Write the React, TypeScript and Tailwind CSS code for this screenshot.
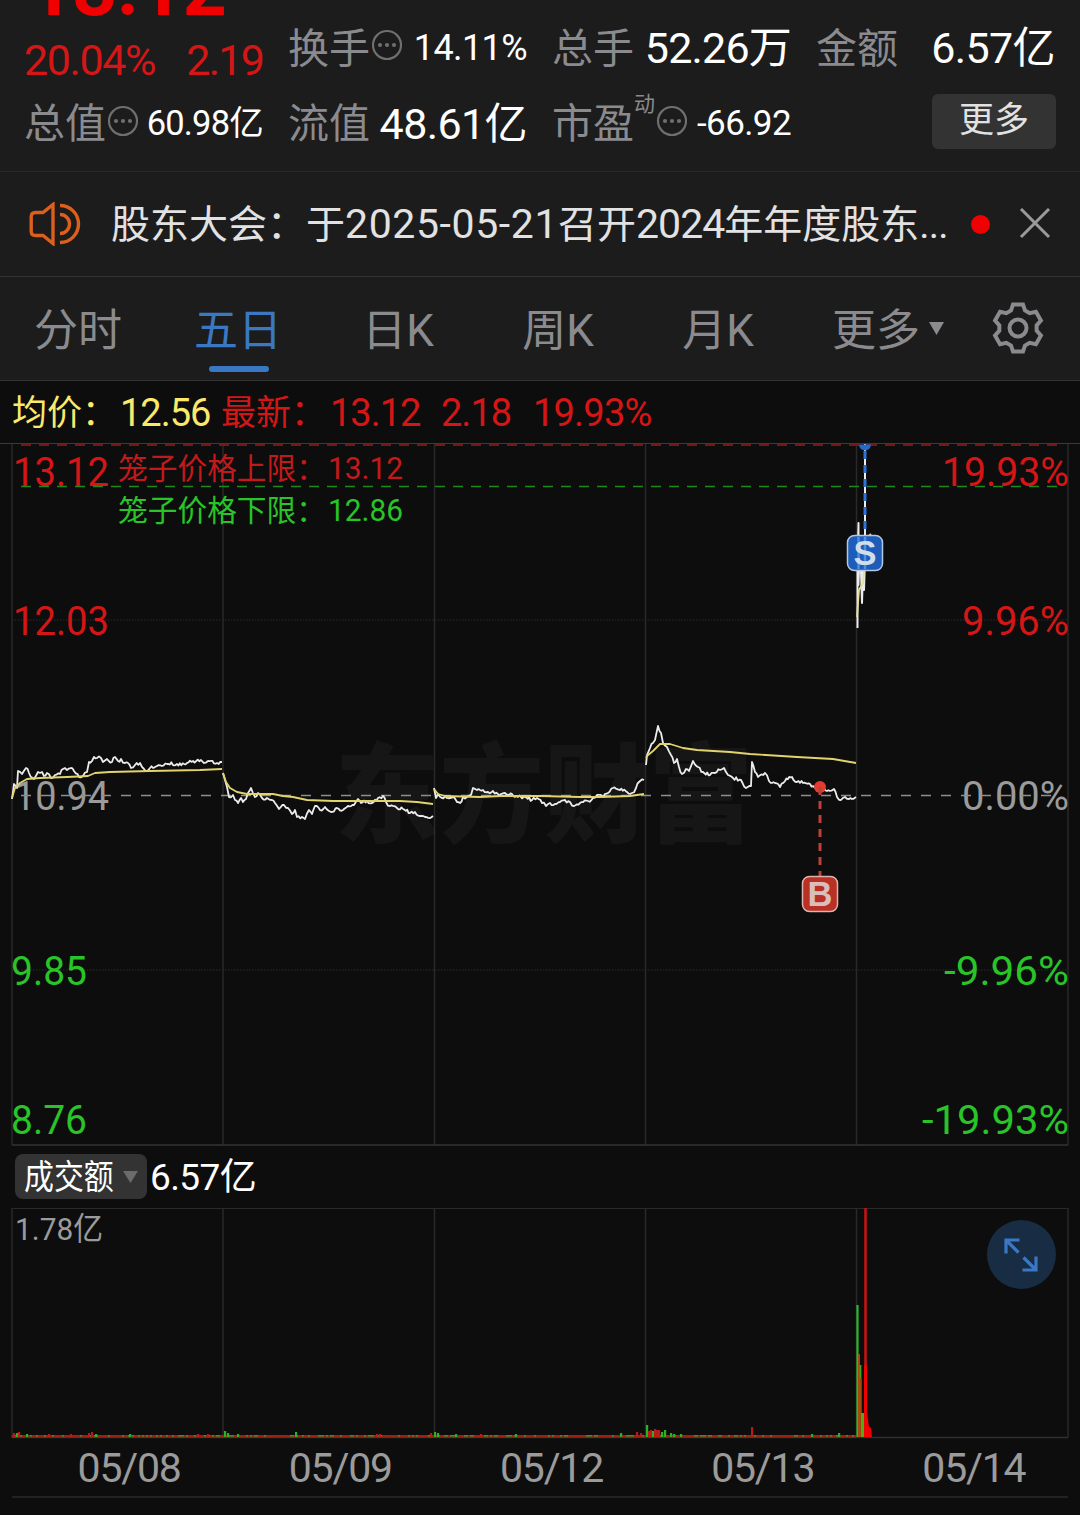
import React from 'react';
import clsx from 'clsx';

const FONT = "font-['Roboto','Noto_Sans_CJK_SC',sans-serif]";

// ── Data ──────────────────────────────────────────────────────────────────────
type Pt = [number, number];

const TABS = ['分时', '五日', '日K', '周K', '月K'];
const DATES = ['05/08', '05/09', '05/12', '05/13', '05/14'];
const DAY_X = [12, 223, 434.5, 645.5, 856.5, 1068];

const PRICE: Pt[][] = [
  [
    [12, 799], [14, 784], [17, 788], [18, 771], [22, 774], [26, 768], [29, 773], [34, 779], [38, 772], [42, 772],
    [44, 776], [47, 773], [51, 778], [55, 775], [60, 774], [63, 769], [67, 770], [71, 768], [74, 771], [79, 777],
    [83, 776], [87, 772], [89, 762], [92, 761], [94, 757], [97, 758], [101, 758], [103, 762], [107, 759], [112, 762],
    [115, 757], [118, 761], [121, 759], [125, 763], [128, 763], [131, 768], [135, 765], [140, 763], [144, 769],
    [147, 771], [150, 768], [153, 768], [157, 766], [162, 766], [167, 764], [177, 764], [187, 763], [193, 761],
    [201, 760], [204, 763], [208, 761], [217, 763], [222, 762],
  ],
  [
    [223, 773], [227, 787], [229, 797], [233, 795], [235, 800], [238, 803], [241, 798], [243, 802], [246, 799],
    [248, 793], [251, 788], [255, 797], [258, 793], [262, 798], [267, 798], [272, 800], [275, 803], [279, 809],
    [284, 805], [288, 808], [292, 814], [295, 810], [297, 817], [302, 817], [305, 819], [309, 810], [312, 814],
    [315, 806], [320, 810], [325, 807], [331, 812], [337, 808], [343, 810], [348, 806], [354, 805], [358, 799],
    [361, 803], [367, 801], [372, 803], [378, 798], [383, 796], [386, 802], [390, 806], [397, 808], [403, 809],
    [410, 813], [415, 812], [420, 816], [425, 817], [433, 816],
  ],
  [
    [434, 788], [436, 798], [438, 794], [442, 798], [445, 796], [450, 798], [454, 797], [457, 802], [460, 803],
    [463, 797], [467, 797], [471, 795], [473, 788], [477, 790], [483, 790], [488, 792], [493, 791], [498, 794],
    [505, 793], [512, 794], [518, 797], [525, 797], [532, 800], [537, 798], [542, 803], [546, 806], [550, 803],
    [555, 804], [560, 802], [565, 800], [570, 802], [574, 806], [580, 803], [588, 801], [593, 798], [597, 795],
    [602, 796], [608, 793], [613, 788], [620, 790], [627, 792], [632, 793], [636, 788], [639, 782], [644, 780],
  ],
  [
    [646, 765], [647, 755], [650, 748], [653, 743], [655, 740], [658, 726], [661, 733], [663, 743], [667, 747],
    [671, 755], [674, 763], [677, 759], [679, 767], [682, 774], [686, 769], [689, 771], [693, 761], [698, 767],
    [703, 772], [710, 775], [715, 773], [720, 770], [724, 768], [728, 775], [733, 778], [741, 780], [746, 788],
    [751, 786], [752, 762], [755, 772], [758, 777], [763, 775], [765, 773], [769, 781], [775, 783], [780, 787],
    [785, 781], [792, 777], [797, 782], [803, 783], [810, 784], [815, 788], [820, 788], [827, 791], [834, 789],
    [837, 797], [841, 800], [845, 797], [849, 799], [856, 797],
  ],
];

const AVERAGE: Pt[][] = [
  [[12, 798], [15, 788], [20, 783], [27, 779], [40, 778], [67, 777], [88, 776], [95, 773], [110, 772], [150, 771], [200, 770], [222, 769]],
  [[223, 773], [226, 782], [230, 788], [237, 792], [247, 794], [273, 794], [283, 796], [293, 797], [307, 800], [333, 801], [400, 801], [417, 802], [433, 804]],
  [[434, 789], [438, 794], [445, 796], [480, 797], [500, 796], [540, 796], [580, 797], [600, 797], [630, 796], [644, 794]],
  [[646, 758], [647, 756], [653, 751], [660, 744], [670, 744], [683, 748], [697, 750], [730, 752], [750, 754], [797, 757], [833, 759], [856, 763]],
];

// x, height, colour of the turnover bars that rise above the noise floor
const SPIKES: [number, number, 'r' | 'g'][] = [
  [13, 4, 'r'], [16, 4, 'g'], [18, 5, 'r'], [26, 3, 'g'], [48, 3, 'r'], [70, 3, 'r'], [88, 4, 'r'], [91, 5, 'r'], [95, 3, 'g'],
  [129, 3, 'g'], [197, 3, 'r'], [207, 3, 'r'], [224, 6, 'g'], [227, 4, 'g'], [237, 3, 'g'], [295, 5, 'g'], [376, 3, 'r'],
  [379, 3, 'r'], [430, 4, 'r'], [434, 5, 'g'], [437, 4, 'g'], [455, 3, 'g'], [480, 3, 'r'], [515, 3, 'g'], [620, 4, 'g'],
  [636, 5, 'r'], [640, 4, 'r'], [646, 12, 'g'], [648, 6, 'r'], [650, 7, 'r'], [652, 6, 'g'], [654, 8, 'r'], [656, 7, 'r'],
  [658, 7, 'r'], [661, 5, 'g'], [664, 7, 'g'], [670, 4, 'g'], [673, 3, 'g'], [680, 3, 'g'], [751, 10, 'r'], [811, 3, 'g'], [838, 4, 'g'],
];

// ── Helpers ───────────────────────────────────────────────────────────────────
// Cheap deterministic noise in the range -1..1
function noise(n: number) {
  const v = Math.sin(n * 12.9898) * 43758.5453;
  return (v - Math.floor(v)) * 2 - 1;
}

function smooth(points: Pt[]) {
  return 'M' + points.map(([x, y]) => `${x} ${y}`).join('L');
}

function jagged(points: Pt[]) {
  const out: Pt[] = [];
  points.forEach(([x, y], i) => {
    out.push([x, y]);
    const next = points[i + 1];
    if (!next) return;
    const steps = Math.floor((next[0] - x) / 1.4);
    for (let s = 1; s < steps; s++) {
      const t = s / steps;
      out.push([x + (next[0] - x) * t, y + (next[1] - y) * t + noise(x + s) * 1.8]);
    }
  });
  return smooth(out);
}

// ── Icons ─────────────────────────────────────────────────────────────────────
function MoreDots() {
  return (
    <svg className="h-8 w-8 shrink-0" viewBox="0 0 32 32" fill="#6f6f6f">
      <circle cx="17" cy="16" r="14" fill="none" stroke="#6f6f6f" strokeWidth="2.2" />
      <circle cx="10" cy="16" r="2.1" />
      <circle cx="17" cy="16" r="2.1" />
      <circle cx="24" cy="16" r="2.1" />
    </svg>
  );
}

function Speaker() {
  return (
    <svg className="h-[44px] w-[52px] shrink-0" viewBox="0 0 52 44" fill="none" stroke="#dc5f1c" strokeWidth="3.4">
      <path d="M24 2.5V41.5L14 33.5H6.500Q2.200 33.500 2.200 29V15Q2.200 10.500 6.500 10.500H14Z" />
      <path d="M31 3.500A18.500 18.500 0 0 1 31 40.500" />
      <path d="M31 12.500A9.500 9.500 0 0 1 31 31.500" />
    </svg>
  );
}

function Gear() {
  const tooth: Pt[] = [[-7, -17.5], [-5, -23.6], [5, -23.6], [7, -17.5]];
  const points = [0, 60, 120, 180, 240, 300].flatMap((deg) => {
    const a = (deg * Math.PI) / 180;
    return tooth.map(([x, y]) =>
      [(x * Math.cos(a) - y * Math.sin(a)).toFixed(2), (x * Math.sin(a) + y * Math.cos(a)).toFixed(2)].join(','),
    );
  });
  return (
    <svg className="h-[54px] w-[54px]" viewBox="-27 -27 54 54" fill="none" stroke="#8b8b8f" strokeWidth="4">
      <polygon points={points.join(' ')} />
      <circle r="8.500" />
    </svg>
  );
}

// ── Quote header ──────────────────────────────────────────────────────────────
function Label({ children }: { children: React.ReactNode }) {
  return <span className="-ml-px pt-[4px] text-[41px] text-[#8b8b8f]">{children}</span>;
}

function QuoteHeader() {
  return (
    <section className="grid h-[172px] grid-cols-[238px_238px_238px_238px] grid-rows-[85px_75px] gap-x-[26px] overflow-hidden border-b border-[#282828] px-[25px] leading-none whitespace-nowrap text-white">
      <div className="flex flex-col">
        <div className="-mt-[50px] ml-[4px] h-[89px] text-[77px] leading-[78px] font-bold tracking-[-0.3px] text-[#f00000]">13.12</div>
        <div className="flex justify-between text-[43px] text-[#d51616]">
          <span className="-ml-px tracking-[-1.4px]">20.04%</span>
          <span className="tracking-[-1.8px]">2.19</span>
        </div>
      </div>
      <div className="flex items-center pt-[10px]">
        <Label>换手</Label>
        <span className="-mt-1.5"><MoreDots /></span>
        <span className="ml-auto text-[36px] tracking-[-0.6px]">14.11%</span>
      </div>
      <div className="flex items-center justify-between pt-[10px]">
        <Label>总手</Label>
        <span className="pt-[2px] text-[43px] tracking-[-0.8px]">52.26万</span>
      </div>
      <div className="flex items-center justify-between pt-[10px]">
        <Label>金额</Label>
        <span className="pt-[2px] text-[43px] tracking-[-0.6px]">6.57亿</span>
      </div>

      <div className="flex items-center">
        <Label>总值</Label>
        <span className="-mt-1"><MoreDots /></span>
        <span className="ml-auto pt-px text-[34.5px] tracking-[-0.8px]">60.98亿</span>
      </div>
      <div className="flex items-center justify-between">
        <Label>流值</Label>
        <span className="pt-[3px] text-[43px] tracking-[-0.6px]">48.61亿</span>
      </div>
      <div className="flex items-center">
        <Label>市盈</Label>
        <span className="-mt-[36px] text-[21px] text-[#8b8b8f]">动</span>
        <span className="-mt-1"><MoreDots /></span>
        <span className="ml-auto pt-[2px] text-[35px] tracking-[-0.6px]">-66.92</span>
      </div>
      <div className="flex items-center justify-end">
        <button className="mt-[-2px] mr-[-1px] h-[55px] w-[124px] rounded-md bg-[#333] pb-0.5 text-[35px] text-[#e2e2e2]">更多</button>
      </div>
    </section>
  );
}

// ── Announcement ──────────────────────────────────────────────────────────────
function NoticeBar() {
  return (
    <section className="flex h-[105px] items-center border-b border-[#333] pl-[29px] whitespace-nowrap">
      <Speaker />
      <p className="ml-[30px] w-[838px] text-[39px] leading-none text-[#e2e2e2]">
        股东大会：于<span className="text-[41px] tracking-[0.6px]">2025-05-21</span>召开
        <span className="text-[41px] tracking-[-1px]">2024</span>年年度股东<span className="tracking-[-0.8px]">...</span>
      </p>
      <span className="ml-[22px] h-[19px] w-[19px] rounded-full bg-[#f00000]" />
      <svg className="ml-[29px] h-8 w-8" viewBox="0 0 32 32" stroke="#9a9a9a" strokeWidth="3">
        <path d="M2 1L30 29M30 1L2 29" />
      </svg>
    </section>
  );
}

// ── Period tabs ───────────────────────────────────────────────────────────────
function PeriodTabs() {
  return (
    <nav className="flex h-[104px] border-b border-[#333] text-[44px] leading-none text-[#8b8b8f]">
      {TABS.map((tab) => (
        <div key={tab} className={clsx('flex w-[160px] flex-col items-center pt-[32px]', tab === '五日' && 'text-[#3a78c4]')}>
          <span className="-ml-[4px]">{tab}</span>
          {tab === '五日' && <span className="mt-[13px] mr-[2px] h-[6px] w-[60px] rounded-full bg-[#3a78c4]" />}
        </div>
      ))}
      <div className="flex items-start pt-[32px] pl-[32px]">
        更多
        <svg className="mt-[13px] ml-[9px] h-[13px] w-[15px]" viewBox="0 0 15 13" fill="#8b8b8f">
          <path d="M0 0H15L7.500 13Z" />
        </svg>
      </div>
      <div className="mt-[24px] mr-[35px] ml-auto">
        <Gear />
      </div>
    </nav>
  );
}

function PriceSummary() {
  return (
    <div className="flex h-[62px] items-center pl-[12px] text-[35px] leading-none whitespace-nowrap text-[#d51616]">
      <span className="w-[108px] pt-[3px] text-[#fbe96b]">均价：</span>
      <span className="w-[101px] pt-px text-[38px] tracking-[-1px] text-[#fbe96b]">12.56</span>
      <span className="w-[109px] pt-[3px]">最新：</span>
      <span className="w-[111px] pt-px text-[38px] tracking-[-1px]">13.12</span>
      <span className="w-[92px] pt-px text-[38px] tracking-[-1px]">2.18</span>
      <span className="pt-px text-[38px] tracking-[-0.8px]">19.93%</span>
    </div>
  );
}

// ── Five-day price chart ──────────────────────────────────────────────────────
function AxisText({ x, y, w, fill, size = 40.5, children }: { x: number; y: number; w: number; fill: string; size?: number; children: string }) {
  return (
    <text x={x} y={y} fontSize={size} fill={fill} textLength={w} lengthAdjust="spacingAndGlyphs">
      {children}
    </text>
  );
}

function PriceChart() {
  return (
    <svg className="block h-[703px] w-[1080px]" viewBox="0 443 1080 703">
      <text x="335" y="834" fontSize="108" fontWeight="900" fill="#161616" textLength="418" lengthAdjust="spacingAndGlyphs">
        东方财富
      </text>

      {/* Grid */}
      <path d="M0 443.500H1080" stroke="#3a3a3a" />
      {DAY_X.map((x) => (
        <path key={x} d={`M${x} 444V1145`} stroke="#292929" strokeWidth="1.500" />
      ))}
      <path d="M12 1145H1068" stroke="#333" strokeWidth="1.500" />
      <path d="M12 620H1068M12 970H1068" stroke="#2c2c2c" strokeDasharray="1.500 1.500" />

      <AxisText x={13} y={486} w={96} fill="#d51616">13.12</AxisText>
      <AxisText x={13} y={635} w={96} fill="#d51616">12.03</AxisText>
      <AxisText x={14} y={810} w={95} fill="#9b9b9b">10.94</AxisText>
      <AxisText x={11} y={985} w={76} fill="#28c428">9.85</AxisText>
      <AxisText x={11} y={1134} w={76} fill="#28c428">8.76</AxisText>
      <AxisText x={942} y={486} w={127} fill="#d51616">19.93%</AxisText>
      <AxisText x={962} y={635} w={107} fill="#d51616">9.96%</AxisText>
      <AxisText x={962} y={810} w={107} fill="#9b9b9b">0.00%</AxisText>
      <AxisText x={944} y={985} w={125} fill="#28c428">-9.96%</AxisText>
      <AxisText x={922} y={1134} w={147} fill="#28c428">-19.93%</AxisText>

      {/* Price cage limits */}
      <path d="M21 445H1058" stroke="#701919" strokeWidth="2.200" strokeDasharray="10 8" />
      <path d="M21 486.500H1058" stroke="#1c8a1c" strokeWidth="1.400" strokeDasharray="10 8" />
      <AxisText x={118} y={479} w={208} size={30} fill="#c21a1a">笼子价格上限：</AxisText>
      <AxisText x={328} y={479} w={75} size={31.5} fill="#c21a1a">13.12</AxisText>
      <AxisText x={118} y={521} w={208} size={30} fill="#28c428">笼子价格下限：</AxisText>
      <AxisText x={328} y={521} w={75} size={31.5} fill="#28c428">12.86</AxisText>

      <path d="M21 795.500H1058" stroke="#8e8e8e" strokeWidth="1.600" strokeDasharray="10 10" />

      {/* Curves */}
      <g fill="none" strokeLinejoin="round">
        {PRICE.map((day, i) => (
          <path key={i} d={jagged(day)} stroke="#ececec" strokeWidth="1.800" />
        ))}
        {AVERAGE.map((day, i) => (
          <path key={i} d={smooth(day)} stroke="#e2d46c" strokeWidth="1.800" />
        ))}
        <path d="M857.500 628V560L858.500 523V585L860 540L862 603L863 570L864 590L865 560V444" stroke="#ececec" strokeWidth="2" />
        <path d="M857 617L859 590L863 583L865 563L867 538L871 534" stroke="#e9df9a" strokeWidth="1.800" />
      </g>

      {/* Sell marker */}
      <path d="M859 444.500A6 6 0 0 0 871 444.500Z" fill="#2469cc" />
      <path d="M865 445V536" stroke="#2f74d6" strokeWidth="3" strokeDasharray="8 6" strokeDashoffset="-6" />
      <rect x="847.500" y="535.500" width="35" height="35" rx="7" fill="#1d5cb8" stroke="#b3c6e4" strokeWidth="1.500" />
      <path d="M858.500 537V569M865 537V569" stroke="#4d8fe0" strokeWidth="2.500" />
      <AxisBadge x={865} y={565} fill="#d3dceb">S</AxisBadge>

      {/* Buy marker */}
      <circle cx="820" cy="787" r="6" fill="#e23c30" />
      <path d="M820 787V877" stroke="#bb4038" strokeWidth="3" strokeDasharray="8 6" />
      <rect x="802.500" y="876.500" width="35" height="35" rx="7" fill="#b93025" stroke="#dcb3ae" strokeWidth="1.500" />
      <AxisBadge x={820} y={906} fill="#d9bebc">B</AxisBadge>
    </svg>
  );
}

function AxisBadge({ x, y, fill, children }: { x: number; y: number; fill: string; children: string }) {
  return (
    <text x={x} y={y} fontSize="34.500" fontWeight="700" fill={fill} textAnchor="middle" className="font-['Liberation_Sans',sans-serif]">
      {children}
    </text>
  );
}

// ── Turnover ──────────────────────────────────────────────────────────────────
function VolumeHeader() {
  return (
    <div className="flex h-[62px] items-start pt-[8px] pl-[15px] leading-none whitespace-nowrap text-white">
      <div className="flex h-[45px] w-[132px] items-center rounded-lg bg-[#333] pl-[9px]">
        <span className="w-[99px] origin-left scale-x-[0.88] pt-px text-[34px]">成交额</span>
        <svg className="h-[12px] w-[15px]" viewBox="0 0 15 12" fill="#6b6b6b">
          <path d="M0 0H15L7.500 12Z" />
        </svg>
      </div>
      <span className="ml-[3px] pt-[5px] text-[37px] tracking-[-0.6px]">6.57亿</span>
    </div>
  );
}

function VolumeChart() {
  const floor = Array.from({ length: 422 }, (_, i) => 12 + i * 2);
  return (
    <div className="relative">
      <svg className="block h-[231px] w-[1080px]" viewBox="0 1208 1080 231">
        <path d="M12 1208.500H1068" stroke="#2a2a2a" />
        {DAY_X.map((x) => (
          <path key={x} d={`M${x} 1208V1437`} stroke="#292929" strokeWidth="1.500" />
        ))}
        <path d="M12 1437.500H1068" stroke="#303030" strokeWidth="1.500" />
        <AxisText x={15} y={1240} w={88} size={31.5} fill="#9b9b9b">1.78亿</AxisText>

        {floor.map((x) => (
          <rect key={x} x={x} y="1435" width="2" height="2.200" fill={noise(x) > 0.35 ? '#2f9a22' : '#b01616'} />
        ))}
        <path d="M11 1437H857" stroke="#8a2a12" />
        {SPIKES.map(([x, h, c]) => (
          <rect key={x} x={x} y={1437 - h} width="2.200" height={h} fill={c === 'r' ? '#b81a14' : '#2cb024'} />
        ))}

        {/* Opening burst on the last day */}
        <path d="M857.500 1305V1437" stroke="#2cb82c" strokeWidth="2.200" />
        <path d="M859 1354V1437" stroke="#a8460c" strokeWidth="2" />
        <path d="M860.500 1365V1437" stroke="#3ba818" strokeWidth="1.800" />
        <path d="M860.500 1378V1437" stroke="#9a4a0c" strokeWidth="2" />
        <path d="M862.500 1413V1437" stroke="#4cae18" strokeWidth="3" />
        <path d="M865.500 1208V1437" stroke="#c41414" strokeWidth="2.600" />
        <path d="M864 1365H867V1412L869 1427L871 1428L872 1437H864Z" fill="#f00000" />
      </svg>
      <button className="absolute top-[12px] right-[24px] flex h-[69px] w-[69px] items-center justify-center rounded-full bg-[#182c44]">
        <svg className="mr-px h-[34px] w-[34px]" viewBox="0 0 34 34" fill="none" stroke="#3a78c4" strokeWidth="3.200">
          <path d="M15.500 2H2V15.500M2.500 2.500L14.500 14.500M32 18.500V32H18.500M31.500 31.500L19.500 19.500" />
        </svg>
      </button>
    </div>
  );
}

function DateAxis() {
  return (
    <div className="mx-[12px] flex h-[59px] border-b-2 border-[#222] text-[41px] leading-[59px] tracking-[-1.2px] text-[#9b9b9b]">
      {DATES.map((date) => (
        <span key={date} className="flex-1 pl-[23px] text-center">{date}</span>
      ))}
    </div>
  );
}

export default function App() {
  return (
    <div className={clsx('h-[1515px] w-[1080px] overflow-hidden bg-[#0d0d0d]', FONT)}>
      <div className="bg-[#1c1c1c]">
        <QuoteHeader />
        <NoticeBar />
        <PeriodTabs />
      </div>
      <PriceSummary />
      <PriceChart />
      <VolumeHeader />
      <VolumeChart />
      <DateAxis />
    </div>
  );
}
